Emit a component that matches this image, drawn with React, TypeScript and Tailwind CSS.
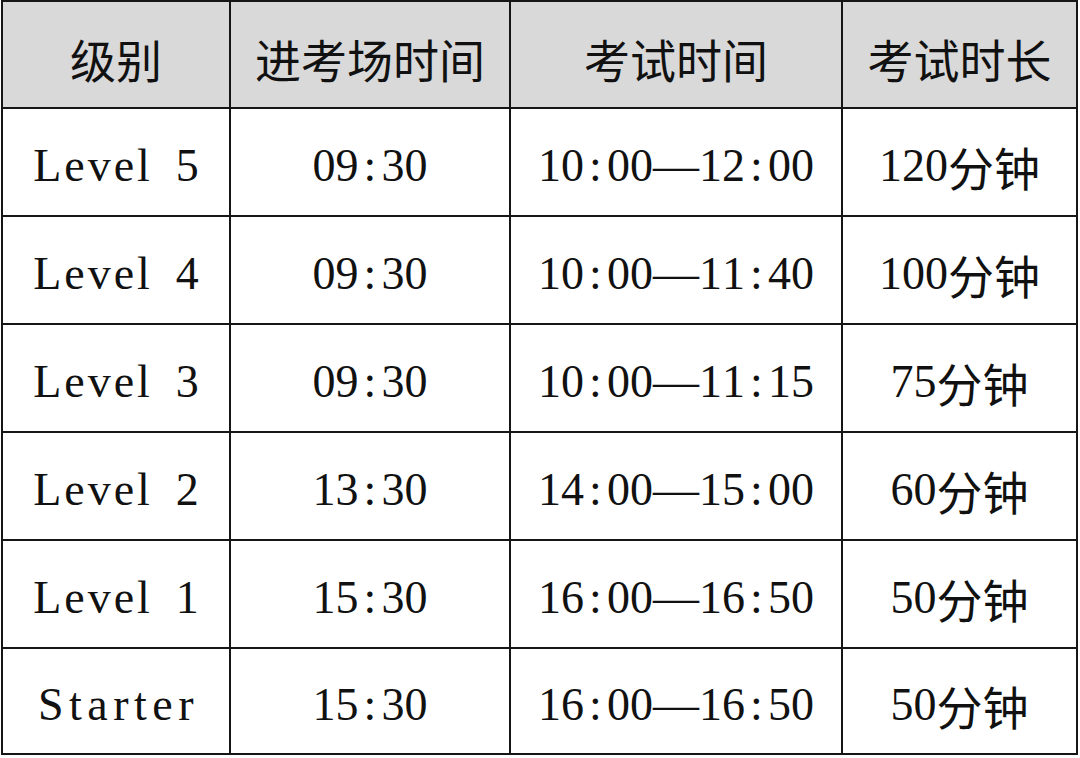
import React from "react";

const header = ["级别", "进考场时间", "考试时间", "考试时长"];
const rows = [
  ["Level 5", "09:30", "10:00—12:00", "120分钟"],
  ["Level 4", "09:30", "10:00—11:40", "100分钟"],
  ["Level 3", "09:30", "10:00—11:15", "75分钟"],
  ["Level 2", "13:30", "14:00—15:00", "60分钟"],
  ["Level 1", "15:30", "16:00—16:50", "50分钟"],
  ["Starter", "15:30", "16:00—16:50", "50分钟"],
];

function Txt({ s }: { s: string }) {
  return (
    <span className="inline-flex items-center whitespace-nowrap">
      {Array.from(s).map((ch, i) => {
        const code = ch.charCodeAt(0);
        if (ch === "—") {
          return (
            <span
              key={i}
              className="inline-block w-[46px] text-center font-['Liberation_Serif',serif]"
            >
              —
            </span>
          );
        }
        if (code < 128) {
          return (
            <span
              key={i}
              className="inline-block w-[23px] text-center font-['Liberation_Serif',serif]"
            >
              {ch}
            </span>
          );
        }
        return (
          <span
            key={i}
            className="inline-block w-[46px] text-center font-['Noto_Sans_CJK_SC','Noto_Sans',sans-serif]"
          >
            {ch}
          </span>
        );
      })}
    </span>
  );
}

function Word({ s }: { s: string }) {
  if (s === "Starter") {
    return (
      <span className="whitespace-pre font-['Liberation_Serif',serif] tracking-[5.5px] pl-[5px]">
        {s}
      </span>
    );
  }
  const [word, num] = s.split(" ");
  return (
    <span className="inline-flex items-center whitespace-pre font-['Liberation_Serif',serif]">
      <span className="tracking-[3px]">{word}</span>
      <span className="inline-block w-[23px]"> </span>
      <span className="inline-block w-[23px] text-center">{num}</span>
    </span>
  );
}

export default function App() {
  return (
    <div className="w-[1080px] h-[758px] bg-white overflow-hidden">
      <div className="ml-[1px] w-[1077px] grid grid-cols-[226px_278px_330px_233px] grid-rows-[105px_106px_106px_106px_106px_106px_104px] gap-[2px] p-[2px] bg-[#161616] text-[46px] leading-none text-[#111111]">
        {header.map((h, i) => (
          <div
            key={"h" + i}
            className="bg-[#d9d9d9] flex items-center justify-center pt-[6px] font-['Noto_Sans_CJK_SC','Noto_Sans',sans-serif]"
          >
            {h}
          </div>
        ))}
        {rows.map((r, ri) =>
          r.map((c, ci) => (
            <div
              key={ri + "-" + ci}
              className="bg-white flex items-center justify-center pt-[8px]"
            >
              {ci === 0 ? <Word s={c} /> : <Txt s={c} />}
            </div>
          ))
        )}
      </div>
    </div>
  );
}
